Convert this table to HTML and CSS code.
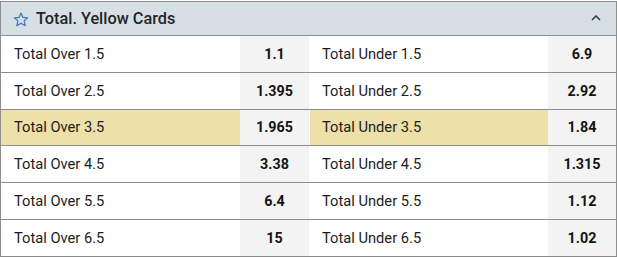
FILE: index.html
```html
<!DOCTYPE html>
<html>
<head>
<meta charset="utf-8">
<link rel="stylesheet" href="styles.css">
</head>
<body>
<section class="market">
  <header class="market-head">
    <svg class="star" width="16" height="15" viewBox="0 0 16 15"><path d="M8 1 L9.9 5.4 L14.7 5.8 L11.1 8.9 L12.2 13.7 L8 11.2 L3.8 13.7 L4.9 8.9 L1.3 5.8 L6.1 5.4 Z" fill="none" stroke="#3d78c2" stroke-width="1.2" stroke-linejoin="round"/></svg>
    <span class="title">Total. Yellow Cards</span>
    <svg class="chevron" width="10" height="6" viewBox="0 0 10 6"><path d="M1 5 L5 1 L9 5" fill="none" stroke="#2e3a48" stroke-width="1.5"/></svg>
  </header>
  <div class="rows">
    <div class="row"><div class="name">Total Over 1.5</div><div class="odd">1.1</div><div class="name right">Total Under 1.5</div><div class="odd">6.9</div></div>
    <div class="row"><div class="name">Total Over 2.5</div><div class="odd">1.395</div><div class="name right">Total Under 2.5</div><div class="odd">2.92</div></div>
    <div class="row hl"><div class="name">Total Over 3.5</div><div class="odd">1.965</div><div class="name right">Total Under 3.5</div><div class="odd">1.84</div></div>
    <div class="row"><div class="name">Total Over 4.5</div><div class="odd">3.38</div><div class="name right">Total Under 4.5</div><div class="odd">1.315</div></div>
    <div class="row"><div class="name">Total Over 5.5</div><div class="odd">6.4</div><div class="name right">Total Under 5.5</div><div class="odd">1.12</div></div>
    <div class="row"><div class="name">Total Over 6.5</div><div class="odd">15</div><div class="name right">Total Under 6.5</div><div class="odd">1.02</div></div>
  </div>
</section>
</body>
</html>
```
FILE: styles.css
```css
html, body {
  margin: 0;
  padding: 0;
  background: #ffffff;
}
body {
  font-family: Roboto, "Liberation Sans", Arial, sans-serif;
  color: #1b1b1b;
}
.market {
  margin-top: 1px;
  width: 617px;
  box-sizing: border-box;
  border: 1px solid #8e8e8e;
  border-bottom: none;
}
.market-head {
  display: flex;
  align-items: center;
  height: 33px;
  background: #d5dfe4;
  border-bottom: 1px solid #8e8e8e;
  padding: 0 12px 0 12px;
}
.star {
  margin-right: 7px;
  margin-top: 1px;
}
.title {
  font-size: 16.3px;
  font-weight: 500;
  color: #222528;
  flex: 1;
}
.chevron {
  margin-right: 3px;
  margin-top: -2px;
}
.row {
  display: grid;
  grid-template-columns: 239px 69px 239px 1fr;
  height: 35.8px;
  border-bottom: 1px solid #8e8e8e;
  font-size: 14.7px;
}
.name {
  display: flex;
  align-items: center;
  padding-left: 13px;
  color: #1c1c1c;
}
.name.right {
  border-left: 1px solid #ffffff;
  padding-left: 12px;
}
.odd {
  display: flex;
  align-items: center;
  justify-content: center;
  background: #f3f3f3;
  font-weight: 700;
  font-size: 14.3px;
  color: #141414;
}
.row.hl .name {
  background: #ede0a9;
}
```
